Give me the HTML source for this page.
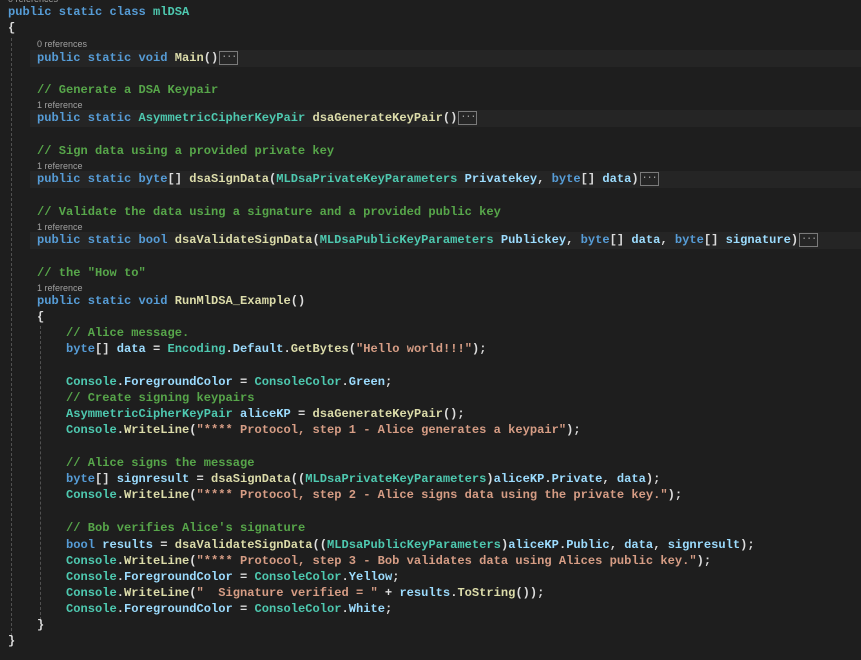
<!DOCTYPE html>
<html><head><meta charset="utf-8"><style>
body{margin:0;width:861px;height:660px;background:#1e1e1e;overflow:hidden;position:relative;font-family:"Liberation Mono",monospace;}
.l{position:absolute;left:8px;font-size:12.08px;font-weight:bold;white-space:pre;color:#dcdcdc;line-height:16px;height:16px;}
.r{position:absolute;font-family:"Liberation Sans",sans-serif;font-size:9px;color:#a0a0a0;white-space:pre;line-height:11px;}
.hl{position:absolute;left:30px;right:0;height:17px;background:#252525;}
.k{color:#569cd6}.t{color:#4ec9b0}.m{color:#dcdcaa}.v{color:#9cdcfe}.s{color:#d69d85}.c{color:#57a64a}
.b{display:inline-block;border:1px solid #7a7a7a;color:#a0a0a0;font-weight:normal;height:12px;line-height:8px;padding:0 1px;margin-left:1px;vertical-align:middle;font-size:10px;letter-spacing:-1px;}
.g{position:absolute;width:0;border-left:1px dashed #505050;}
</style></head><body>
<div class="g" style="left:11px;top:38px;height:598px"></div>
<div class="g" style="left:40px;top:326px;height:294px"></div>
<div class="hl" style="top:50px"></div>
<div class="hl" style="top:110px"></div>
<div class="hl" style="top:171px"></div>
<div class="hl" style="top:232px"></div>
<div class="r" style="left:8px;top:-6px">0 references</div>
<div class="l" style="top:4px"><span class="k">public static class</span> <span class="t">mlDSA</span></div>
<div class="l" style="top:20px">{</div>
<div class="r" style="left:37px;top:39px">0 references</div>
<div class="l" style="top:50px">    <span class="k">public static void</span> <span class="m">Main</span>()<span class="b">...</span></div>
<div class="l" style="top:82px">    <span class="c">// Generate a DSA Keypair</span></div>
<div class="r" style="left:37px;top:100px">1 reference</div>
<div class="l" style="top:110px">    <span class="k">public static</span> <span class="t">AsymmetricCipherKeyPair</span> <span class="m">dsaGenerateKeyPair</span>()<span class="b">...</span></div>
<div class="l" style="top:143px">    <span class="c">// Sign data using a provided private key</span></div>
<div class="r" style="left:37px;top:161px">1 reference</div>
<div class="l" style="top:171px">    <span class="k">public static byte</span>[] <span class="m">dsaSignData</span>(<span class="t">MLDsaPrivateKeyParameters</span> <span class="v">Privatekey</span>, <span class="k">byte</span>[] <span class="v">data</span>)<span class="b">...</span></div>
<div class="l" style="top:204px">    <span class="c">// Validate the data using a signature and a provided public key</span></div>
<div class="r" style="left:37px;top:222px">1 reference</div>
<div class="l" style="top:232px">    <span class="k">public static bool</span> <span class="m">dsaValidateSignData</span>(<span class="t">MLDsaPublicKeyParameters</span> <span class="v">Publickey</span>, <span class="k">byte</span>[] <span class="v">data</span>, <span class="k">byte</span>[] <span class="v">signature</span>)<span class="b">...</span></div>
<div class="l" style="top:265px">    <span class="c">// the "How to"</span></div>
<div class="r" style="left:37px;top:283px">1 reference</div>
<div class="l" style="top:293px">    <span class="k">public static void</span> <span class="m">RunMlDSA_Example</span>()</div>
<div class="l" style="top:309px">    {</div>
<div class="l" style="top:325px">        <span class="c">// Alice message.</span></div>
<div class="l" style="top:341px">        <span class="k">byte</span>[] <span class="v">data</span> = <span class="t">Encoding</span>.<span class="v">Default</span>.<span class="m">GetBytes</span>(<span class="s">"Hello world!!!"</span>);</div>
<div class="l" style="top:374px">        <span class="t">Console</span>.<span class="v">ForegroundColor</span> = <span class="t">ConsoleColor</span>.<span class="v">Green</span>;</div>
<div class="l" style="top:390px">        <span class="c">// Create signing keypairs</span></div>
<div class="l" style="top:406px">        <span class="t">AsymmetricCipherKeyPair</span> <span class="v">aliceKP</span> = <span class="m">dsaGenerateKeyPair</span>();</div>
<div class="l" style="top:422px">        <span class="t">Console</span>.<span class="m">WriteLine</span>(<span class="s">"**** Protocol, step 1 - Alice generates a keypair"</span>);</div>
<div class="l" style="top:455px">        <span class="c">// Alice signs the message</span></div>
<div class="l" style="top:471px">        <span class="k">byte</span>[] <span class="v">signresult</span> = <span class="m">dsaSignData</span>((<span class="t">MLDsaPrivateKeyParameters</span>)<span class="v">aliceKP</span>.<span class="v">Private</span>, <span class="v">data</span>);</div>
<div class="l" style="top:487px">        <span class="t">Console</span>.<span class="m">WriteLine</span>(<span class="s">"**** Protocol, step 2 - Alice signs data using the private key."</span>);</div>
<div class="l" style="top:520px">        <span class="c">// Bob verifies Alice's signature</span></div>
<div class="l" style="top:537px">        <span class="k">bool</span> <span class="v">results</span> = <span class="m">dsaValidateSignData</span>((<span class="t">MLDsaPublicKeyParameters</span>)<span class="v">aliceKP</span>.<span class="v">Public</span>, <span class="v">data</span>, <span class="v">signresult</span>);</div>
<div class="l" style="top:553px">        <span class="t">Console</span>.<span class="m">WriteLine</span>(<span class="s">"**** Protocol, step 3 - Bob validates data using Alices public key."</span>);</div>
<div class="l" style="top:569px">        <span class="t">Console</span>.<span class="v">ForegroundColor</span> = <span class="t">ConsoleColor</span>.<span class="v">Yellow</span>;</div>
<div class="l" style="top:585px">        <span class="t">Console</span>.<span class="m">WriteLine</span>(<span class="s">"  Signature verified = "</span> + <span class="v">results</span>.<span class="m">ToString</span>());</div>
<div class="l" style="top:601px">        <span class="t">Console</span>.<span class="v">ForegroundColor</span> = <span class="t">ConsoleColor</span>.<span class="v">White</span>;</div>
<div class="l" style="top:617px">    }</div>
<div class="l" style="top:633px">}</div>
</body></html>
